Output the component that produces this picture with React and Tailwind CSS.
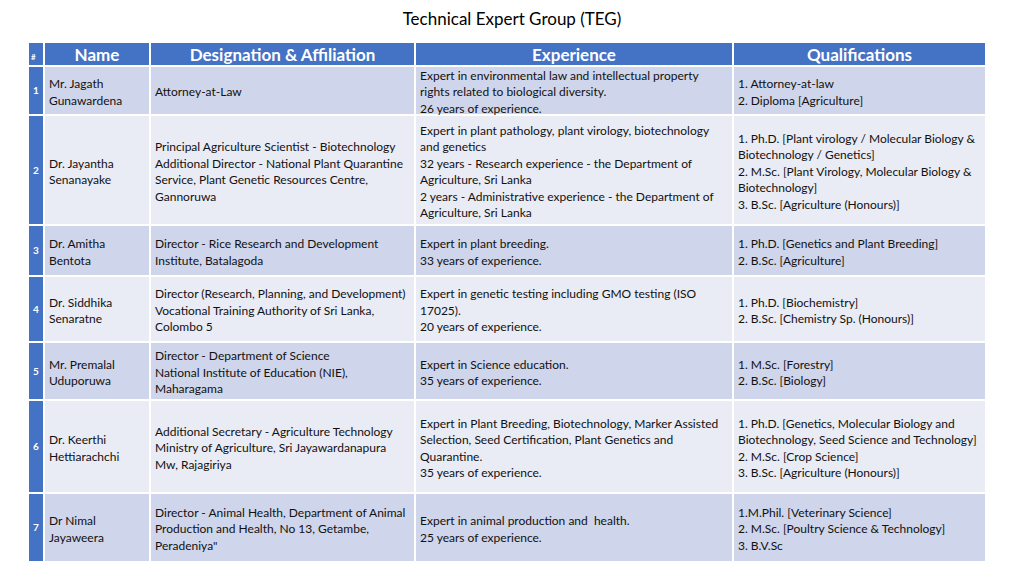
const rows = [
  {
    n: 1,
    name: ['Mr. Jagath', 'Gunawardena'],
    desig: ['Attorney-at-Law'],
    exp: ['Expert in environmental law and intellectual property', 'rights related to biological diversity.', '26 years of experience.'],
    qual: ['1. Attorney-at-law', '2. Diploma [Agriculture]'],
  },
  {
    n: 2,
    name: ['Dr. Jayantha', 'Senanayake'],
    desig: ['Principal Agriculture Scientist - Biotechnology', 'Additional Director - National Plant Quarantine', 'Service, Plant Genetic Resources Centre,', 'Gannoruwa'],
    exp: ['Expert in plant pathology, plant virology, biotechnology', 'and genetics', '32 years - Research experience - the Department of', 'Agriculture, Sri Lanka', '2 years - Administrative experience - the Department of', 'Agriculture, Sri Lanka'],
    qual: ['1. Ph.D. [Plant virology / Molecular Biology &', 'Biotechnology / Genetics]', '2. M.Sc. [Plant Virology, Molecular Biology &', 'Biotechnology]', '3. B.Sc. [Agriculture (Honours)]'],
  },
  {
    n: 3,
    name: ['Dr. Amitha', 'Bentota'],
    desig: ['Director - Rice Research and Development', 'Institute, Batalagoda'],
    exp: ['Expert in plant breeding.', '33 years of experience.'],
    qual: ['1. Ph.D. [Genetics and Plant Breeding]', '2. B.Sc. [Agriculture]'],
  },
  {
    n: 4,
    name: ['Dr. Siddhika', 'Senaratne'],
    desig: ['Director (Research, Planning, and Development)', 'Vocational Training Authority of Sri Lanka,', 'Colombo 5'],
    exp: ['Expert in genetic testing including GMO testing (ISO', '17025).', '20 years of experience.'],
    qual: ['1. Ph.D. [Biochemistry]', '2. B.Sc. [Chemistry Sp. (Honours)]'],
  },
  {
    n: 5,
    name: ['Mr. Premalal', 'Uduporuwa'],
    desig: ['Director - Department of Science', 'National Institute of Education (NIE),', 'Maharagama'],
    exp: ['Expert in Science education.', '35 years of experience.'],
    qual: ['1. M.Sc. [Forestry]', '2. B.Sc. [Biology]'],
  },
  {
    n: 6,
    name: ['Dr. Keerthi', 'Hettiarachchi'],
    desig: ['Additional Secretary - Agriculture Technology', 'Ministry of Agriculture, Sri Jayawardanapura', 'Mw, Rajagiriya'],
    exp: ['Expert in Plant Breeding, Biotechnology, Marker Assisted', 'Selection, Seed Certification, Plant Genetics and', 'Quarantine.', '35 years of experience.'],
    qual: ['1. Ph.D. [Genetics, Molecular Biology and', 'Biotechnology, Seed Science and Technology]', '2. M.Sc. [Crop Science]', '3. B.Sc. [Agriculture (Honours)]'],
  },
  {
    n: 7,
    name: ['Dr Nimal', 'Jayaweera'],
    desig: ['Director - Animal Health, Department of Animal', 'Production and Health, No 13, Getambe,', 'Peradeniya"'],
    exp: ['Expert in animal production and  health.', '25 years of experience.'],
    qual: ['1.M.Phil. [Veterinary Science]', '2. M.Sc. [Poultry Science & Technology]', '3. B.V.Sc'],
  },
]

function Cell({ lines, bg }) {
  return (
    <div className={`${bg} min-h-0 flex flex-col justify-center px-[4px] pt-[4px] text-[12px] leading-[16.5px] text-[#111] whitespace-pre`}>
      {lines.map((l, i) => (
        <div key={i}>{l}</div>
      ))}
    </div>
  )
}

export default function App() {
  return (
    <div className="w-[1024px] h-[576px] bg-white font-['Lato','Open_Sans',sans-serif] overflow-hidden">
      <h1 className="pt-[6px] h-[43px] text-center text-[17px] text-black">Technical Expert Group (TEG)</h1>

      <div className="ml-[29px] w-[956px] grid grid-cols-[14px_104px_263px_316px_251px] grid-rows-[22px_47px_108px_49px_64px_56px_91px_67px] gap-[2px]">
        <div className="bg-[#4472c4] text-white text-[8px] font-bold flex items-end pb-[2px] pl-[2px]">#</div>
        {['Name', 'Designation & Affiliation', 'Experience', 'Qualifications'].map((t) => (
          <div key={t} className="bg-[#4472c4] text-white text-[17px] font-bold flex items-center justify-center pt-[2px]">
            {t}
          </div>
        ))}

        {rows.map((r) => {
          const bg = r.n % 2 ? 'bg-[#cfd5ea]' : 'bg-[#e9ebf5]'
          return [
            <div key={`n${r.n}`} className="bg-[#4472c4] text-white text-[10px] font-bold flex items-center justify-center">
              {r.n}
            </div>,
            <Cell key={`a${r.n}`} lines={r.name} bg={bg} />,
            <Cell key={`b${r.n}`} lines={r.desig} bg={bg} />,
            <Cell key={`c${r.n}`} lines={r.exp} bg={bg} />,
            <Cell key={`d${r.n}`} lines={r.qual} bg={bg} />,
          ]
        })}
      </div>
    </div>
  )
}
